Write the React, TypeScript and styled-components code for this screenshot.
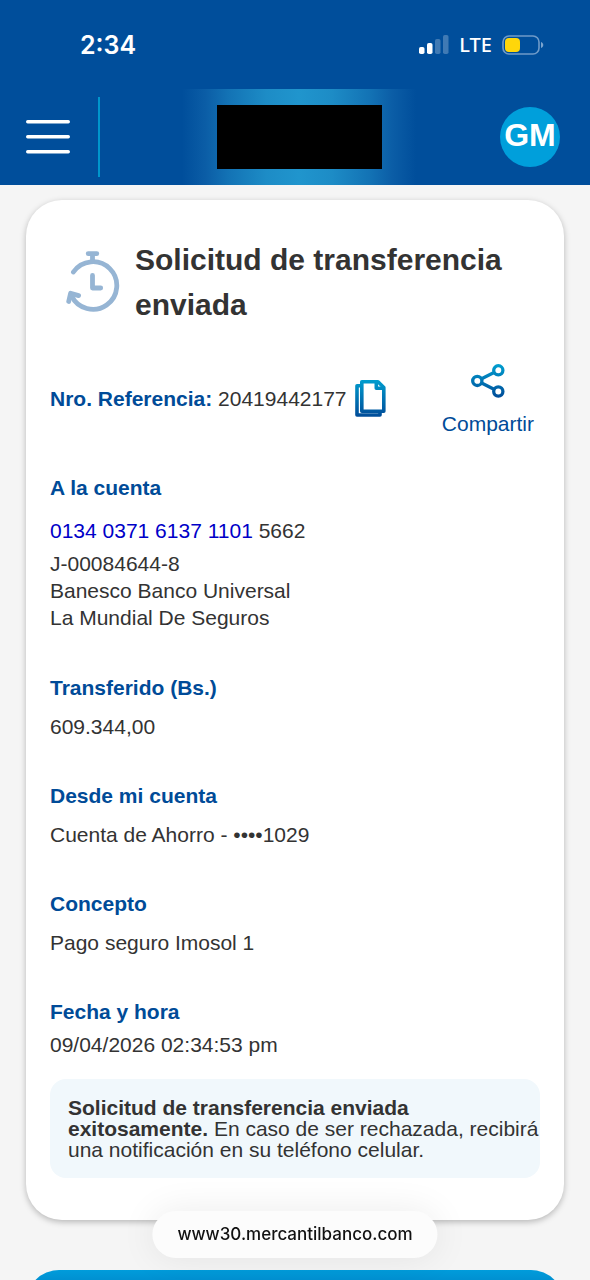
import React from "react";
import styled, { createGlobalStyle } from "styled-components";

const GlobalStyle = createGlobalStyle`
  *, *::before, *::after { box-sizing: border-box; }
  body {
    margin: 0;
    background: #f5f5f5;
    color: #333;
    font-family: "Liberation Sans", Arial, sans-serif;
    font-size: 21px;
    line-height: 27px;
  }
  h1, h2, p { margin: 0; }
  button { border: 0; padding: 0; background: none; font: inherit; cursor: pointer; }
  a { text-decoration: none; }
  svg { display: block; }
`;

const Page = styled.div`
  display: flex;
  flex-direction: column;
  height: 100vh;
`;

const Header = styled.header`
  flex: none;
  background: #004e9b;
  color: #fff;
`;

const StatusBar = styled.div`
  display: flex;
  justify-content: space-between;
  align-items: center;
  height: 89px;
  padding: 0 46px 0 80px;
`;

const Clock = styled.time`
  font: 600 25px/30px Inter, sans-serif;
`;

const StatusIcons = styled.div`
  display: flex;
  align-items: center;
  gap: 10px;
`;

const Network = styled.span`
  font: 500 20px/24px "Noto Sans", sans-serif;
`;

const NavBar = styled.nav`
  display: grid;
  grid-template-columns: 1fr 234px 1fr;
  align-items: center;
  height: 96px;
  padding: 0 18px 0 26px;
`;

const MenuArea = styled.div`
  display: flex;
  align-items: center;
  gap: 28px;
`;

const MenuButton = styled.button`
  color: #fff;
`;

const Divider = styled.span`
  width: 2px;
  height: 80px;
  background: #0096cc;
`;

const BrandGlow = styled.div`
  display: grid;
  place-items: center;
  height: 96px;
  background: linear-gradient(
    90deg,
    #004e9b 0%,
    #0b5da6 10%,
    #1373b5 20%,
    #1d8cc6 36%,
    #2095cd 50%,
    #1d8cc6 64%,
    #1373b5 80%,
    #0b5da6 90%,
    #004e9b 100%
  );
`;

const BrandBlock = styled.div`
  width: 165px;
  height: 64px;
  background: #000;
`;

const Avatar = styled.button`
  justify-self: end;
  width: 60px;
  height: 60px;
  margin-right: 12px;
  padding-bottom: 4px;
  border-radius: 50%;
  background: #009fdb;
  color: #fff;
  font-size: 32px;
  font-weight: 700;
  line-height: 32px;
  display: flex;
  align-items: center;
  justify-content: center;
`;

const Content = styled.main`
  flex: 1;
  min-height: 0;
  overflow-y: auto;
  scrollbar-width: none;
  padding: 15px 26px 80px;
`;

const Card = styled.article`
  padding: 37px 24px 42px;
  border-radius: 36px;
  background: #fff;
  box-shadow: 0 2px 6px rgba(0, 0, 0, 0.26);
`;

const TitleRow = styled.div`
  display: flex;
  align-items: center;
  gap: 15px;
  padding-left: 16px;
`;

const Title = styled.h1`
  font-size: 30px;
  line-height: 45px;
`;

const ReferenceRow = styled.div`
  display: flex;
  justify-content: space-between;
  align-items: flex-start;
  margin-top: 37px;
  padding-right: 6px;
`;

const Reference = styled.div`
  display: flex;
  align-items: center;
  gap: 8px;
  padding-top: 15px;
`;

const Strong = styled.strong`
  color: #004b98;
`;

const ShareButton = styled.button`
  display: flex;
  flex-direction: column;
  align-items: center;
  gap: 12px;
  color: #004b98;
`;

const Section = styled.section<{ $gap?: number }>`
  display: flex;
  flex-direction: column;
  gap: ${(p) => p.$gap ?? 12}px;
  margin-top: 42px;
`;

const AccountSection = styled(Section)`
  margin-top: 37px;
`;

const Label = styled.h2`
  color: #004b98;
  font-size: 21px;
  line-height: 27px;
`;

const AccountDetails = styled.div`
  display: flex;
  flex-direction: column;
  gap: 6px;
  padding-bottom: 1px;
`;

const AccountLink = styled.a`
  color: #0000c8;
`;

const Notice = styled.p`
  margin-top: 21px;
  padding: 18px 0 18px 18px;
  border-radius: 16px;
  background: #f1f8fc;
  line-height: 21px;
`;

const PrimaryButton = styled.button`
  display: block;
  width: 100%;
  height: 66px;
  margin-top: 50px;
  border-radius: 33px;
  background: linear-gradient(#009cdb, #004e9b);
  color: #fff;
`;

const AddressBar = styled.div`
  position: fixed;
  bottom: 22px;
  left: 50%;
  transform: translateX(-50%);
  padding: 10px 25px;
  border-radius: 24px;
  background: #fcfcfc;
  box-shadow: 0 0 36px rgba(0, 0, 0, 0.08);
  color: #111;
  font: 500 17px/27px Inter, sans-serif;
  white-space: nowrap;
`;

const SignalIcon = () => (
  <svg width="30" height="20" viewBox="0 0 30 20" fill="#fff" aria-hidden="true">
    <rect x="0" y="12" width="5.5" height="7" rx="1.8" />
    <rect x="8" y="8" width="5.5" height="11" rx="1.8" />
    <rect x="16" y="4" width="5.5" height="15" rx="1.8" opacity=".25" />
    <rect x="24" y="0" width="5.5" height="19" rx="1.8" opacity=".25" />
  </svg>
);

const BatteryIcon = () => (
  <svg width="42" height="20" viewBox="0 0 42 20" aria-hidden="true">
    <rect x="1" y="1" width="36" height="18" rx="6" fill="none" stroke="#6f9bc9" strokeWidth="1.6" />
    <rect x="3" y="3" width="15" height="14" rx="4" fill="#ffd60a" />
    <path d="M39 7c3 1 3 5 0 6z" fill="#7ba4ce" />
  </svg>
);

const MenuIcon = () => (
  <svg width="44" height="36" viewBox="0 0 44 36" stroke="currentColor" strokeWidth="3.4" strokeLinecap="round" aria-hidden="true">
    <path d="M1.7 2.7h40.6M1.7 17.7h40.6M1.7 32.7h40.6" />
  </svg>
);

const TimerIcon = () => (
  <svg width="54" height="62" viewBox="0 0 54 62" fill="none" stroke="#96b5d4" strokeWidth="4.8" strokeLinecap="round" strokeLinejoin="round" aria-hidden="true">
    <path d="M22.2 2.6h8.6M26.5 2.6v7.5" />
    <path d="M7.4 21A23.8 23.8 0 1 1 5.4 44.5" />
    <path d="M2.7 50.5 4.6 42.3 12.6 44.6" />
    <path d="M26.5 24.5V37h8.2" />
  </svg>
);

const CopyIcon = () => (
  <svg width="31" height="38" viewBox="0 0 31 38" fill="none" stroke="url(#copyGradient)" strokeWidth="3.6" strokeLinejoin="round" aria-hidden="true">
    <defs>
      <linearGradient id="copyGradient" gradientUnits="userSpaceOnUse" x1="0" y1="0" x2="0" y2="38">
        <stop offset="0" stopColor="#009fd0" />
        <stop offset="1" stopColor="#004b98" />
      </linearGradient>
    </defs>
    <path d="M6.8 2.8H23L28.8 8.5V32.2H6.8z" />
    <path d="M21.3 3v6.3h7.5" />
    <path d="M6.5 6.7H2V36H25V33" />
  </svg>
);

const ShareIcon = () => (
  <svg width="34" height="34" viewBox="0 0 34 34" fill="none" stroke="url(#shareGradient)" strokeWidth="3.3" aria-hidden="true">
    <defs>
      <linearGradient id="shareGradient" gradientUnits="userSpaceOnUse" x1="0" y1="0" x2="0" y2="34">
        <stop offset="0" stopColor="#009fd0" />
        <stop offset="1" stopColor="#004b98" />
      </linearGradient>
    </defs>
    <circle cx="27.3" cy="6.3" r="4.6" />
    <circle cx="6.3" cy="16.9" r="4.6" />
    <circle cx="27.3" cy="27.5" r="4.6" />
    <path d="M10.6 14.8 23 8.5M10.6 19 23 25.3" />
  </svg>
);

const entries = [
  { label: "Transferido (Bs.)", value: "609.344,00" },
  { label: "Desde mi cuenta", value: "Cuenta de Ahorro - ••••1029" },
  { label: "Concepto", value: "Pago seguro Imosol 1" },
  { label: "Fecha y hora", value: "09/04/2026 02:34:53 pm", gap: 6 },
];

export default function App() {
  return (
    <Page>
      <GlobalStyle />
      <Header>
        <StatusBar>
          <Clock>2:34</Clock>
          <StatusIcons>
            <SignalIcon />
            <Network>LTE</Network>
            <BatteryIcon />
          </StatusIcons>
        </StatusBar>
        <NavBar>
          <MenuArea>
            <MenuButton type="button" aria-label="Menú">
              <MenuIcon />
            </MenuButton>
            <Divider />
          </MenuArea>
          <BrandGlow>
            <BrandBlock />
          </BrandGlow>
          <Avatar type="button">GM</Avatar>
        </NavBar>
      </Header>

      <Content>
        <Card>
          <TitleRow>
            <TimerIcon />
            <Title>
              Solicitud de transferencia
              <br />
              enviada
            </Title>
          </TitleRow>

          <ReferenceRow>
            <Reference>
              <span>
                <Strong>Nro. Referencia:</Strong> 20419442177
              </span>
              <button type="button" aria-label="Copiar">
                <CopyIcon />
              </button>
            </Reference>
            <ShareButton type="button">
              <ShareIcon />
              Compartir
            </ShareButton>
          </ReferenceRow>

          <AccountSection $gap={16}>
            <Label>A la cuenta</Label>
            <AccountDetails>
              <p>
                <AccountLink href="tel:0134037161371101">0134 0371 6137 1101</AccountLink> 5662
              </p>
              <p>
                J-00084644-8
                <br />
                Banesco Banco Universal
                <br />
                La Mundial De Seguros
              </p>
            </AccountDetails>
          </AccountSection>

          {entries.map((entry) => (
            <Section key={entry.label} $gap={entry.gap}>
              <Label>{entry.label}</Label>
              <p>{entry.value}</p>
            </Section>
          ))}

          <Notice>
            <strong>
              Solicitud de transferencia enviada
              <br />
              exitosamente.
            </strong>{" "}
            En caso de ser rechazada, recibirá una notificación en su teléfono celular.
          </Notice>
        </Card>
        <PrimaryButton type="button" aria-label="Continuar" />
      </Content>

      <AddressBar>www30.mercantilbanco.com</AddressBar>
    </Page>
  );
}
